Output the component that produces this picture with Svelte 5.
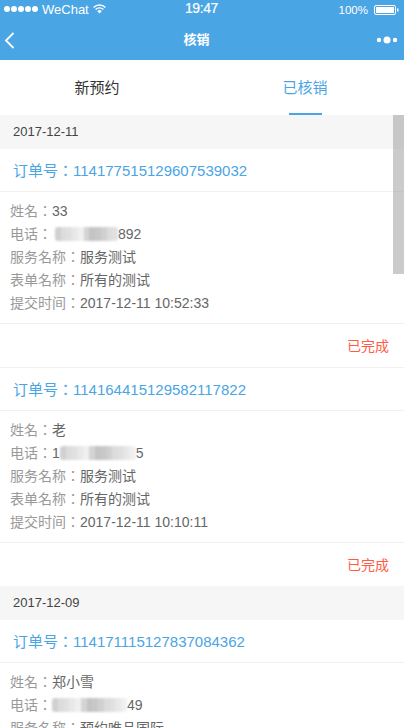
<script>
	const groups = [
		{
			date: '2017-12-11',
			orders: [
				{
					no: '114177515129607539032',
					name: '33',
					before: '',
					mask: 63,
					indent: 3,
					after: '892',
					service: '服务测试',
					form: '所有的测试',
					time: '2017-12-11 10:52:33'
				},
				{
					no: '114164415129582117822',
					name: '老',
					before: '1',
					mask: 76,
					indent: 0,
					after: '5',
					service: '服务测试',
					form: '所有的测试',
					time: '2017-12-11 10:10:11'
				}
			]
		},
		{
			date: '2017-12-09',
			orders: [
				{
					no: '114171115127837084362',
					name: '郑小雪',
					before: '',
					mask: 75,
					indent: 0,
					after: '49',
					service: '预约唯品国际',
					form: '所有的测试',
					time: '2017-12-09 10:10:11'
				}
			]
		}
	];
	const shades = ['#d0d0d0', '#e8e8e8', '#c4c4c4', '#dcdcdc', '#f0f0f0', '#c8c8c8', '#e0e0e0', '#d4d4d4'];
</script>

<div class="page">
	<header class="top">
		<div class="status">
			<div class="status-left">
				<span class="dots">
					{#each Array(5) as _}<i></i>{/each}
				</span>
				<span>WeChat</span>
				<svg width="13" height="10" viewBox="0 0 13 10">
					<path d="M.6 3.4a8.4 8.4 0 0 1 11.8 0M2.6 5.5a5.5 5.5 0 0 1 7.8 0" fill="none" stroke="#fff" stroke-width="1.4" />
					<path d="M4.3 7.2a3 3 0 0 1 4.4 0L6.5 9.6z" fill="#fff" />
				</svg>
			</div>
			<div class="clock">19:47</div>
			<div class="status-right">
				<span>100%</span>
				<svg width="25" height="10" viewBox="0 0 25 10">
					<rect x=".5" y=".5" width="21" height="9" rx="1.5" fill="none" stroke="#fff" />
					<rect x="2" y="2" width="18" height="6" fill="#fff" />
					<rect x="23" y="3.5" width="1.5" height="3" fill="#fff" />
				</svg>
			</div>
		</div>
		<div class="nav">
			<svg class="back" width="11" height="17" viewBox="0 0 11 17">
				<path d="M9.5 1 2 8.5 9.5 16" fill="none" stroke="#fff" stroke-width="1.8" />
			</svg>
			<h1>核销</h1>
			<svg class="more" width="22" height="8" viewBox="0 0 22 8">
				<circle cx="3" cy="4" r="2.2" fill="#fff" />
				<circle cx="11" cy="4" r="3.5" fill="#fff" />
				<circle cx="19" cy="4" r="2.2" fill="#fff" />
			</svg>
		</div>
	</header>

	<nav class="tabs">
		<div class="tab">新预约</div>
		<div class="tab active">已核销</div>
	</nav>

	<main class="list">
		<div class="scrollbar"></div>
		{#each groups as group}
			<div class="date">{group.date}</div>
			{#each group.orders as order}
				<section class="order">
					<div class="order-no"><span>订单号：</span>{order.no}</div>
					<div class="info">
						<p><span>姓名：</span>{order.name}</p>
						<p>
							<span>电话：</span>{order.before}<i class="mask" style="width:{order.mask}px;margin-left:{order.indent}px">
								{#each Array(Math.round(order.mask / 6)) as _, i}
									<b style="background:{shades[(i * 3) % shades.length]}"></b>
								{/each}
							</i>{order.after}
						</p>
						<p><span>服务名称：</span>{order.service}</p>
						<p><span>表单名称：</span>{order.form}</p>
						<p><span>提交时间：</span>{order.time}</p>
					</div>
					<div class="state">已完成</div>
				</section>
			{/each}
		{/each}
	</main>
</div>

<style>
	:global(body) {
		margin: 0;
		background: #fff;
	}

	.page {
		height: 728px;
		overflow: hidden;
		font-family: 'Liberation Sans', 'Noto Sans CJK SC', sans-serif;
		color: #666;
	}

	.top {
		height: 60px;
		background: #4aa5e5;
		color: #fff;
	}

	.status {
		height: 15px;
		padding: 0 5px 2px 4px;
		display: grid;
		grid-template-columns: 1fr auto 1fr;
		align-items: center;
		font-size: 13px;
	}

	.status-left {
		display: flex;
		align-items: center;
		gap: 4px;
	}

	.dots {
		display: flex;
		gap: 1px;
	}

	.dots i {
		width: 6px;
		height: 6px;
		border-radius: 50%;
		background: #fff;
	}

	.clock {
		font-size: 14px;
		letter-spacing: -0.4px;
		-webkit-text-stroke: 0.2px #fff;
		margin-bottom: 2px;
	}

	.status-right {
		display: flex;
		justify-content: flex-end;
		align-items: center;
		gap: 6px;
		font-size: 11.5px;
		margin-top: 2px;
	}

	.nav {
		height: 43px;
		padding: 0 6px 0 4px;
		display: flex;
		align-items: center;
		justify-content: space-between;
	}

	.nav h1 {
		margin: 0 0 0 2px;
		font-size: 13px;
		font-weight: 700;
	}

	.back {
		display: block;
		margin-top: 3px;
	}

	.more {
		margin-top: 2px;
	}

	.tabs {
		height: 55px;
		display: grid;
		grid-template-columns: 194px 198px;
		justify-content: space-between;
		background: #fff;
	}

	.tab {
		position: relative;
		line-height: 55px;
		text-align: center;
		font-size: 15px;
		color: #333;
	}

	.tab.active {
		color: #4aa5e5;
	}

	.tab.active::after {
		content: '';
		position: absolute;
		left: 83px;
		bottom: 0;
		width: 33px;
		height: 2px;
		background: #4aa5e5;
	}

	.list {
		position: relative;
	}

	.scrollbar {
		position: absolute;
		top: 0;
		right: 0;
		width: 11px;
		height: 159px;
		background: rgba(160, 160, 160, 0.55);
	}

	.date {
		height: 34px;
		padding-left: 13px;
		line-height: 34px;
		font-size: 13px;
		color: #444;
		background: #f6f6f6;
	}

	.order-no {
		height: 42px;
		padding-left: 13px;
		line-height: 43px;
		font-size: 15px;
		color: #4aa5e5;
		border-bottom: 1px solid #f1f1f1;
	}

	/* TC face keeps the full-width colon centred in its box */
	.order-no span,
	.info span {
		font-family: 'Liberation Sans', 'Noto Sans CJK TC', sans-serif;
	}

	.info {
		padding: 8px 10px;
		border-bottom: 1px solid #f1f1f1;
	}

	.info p {
		margin: 0;
		height: 23px;
		line-height: 23px;
		font-size: 14px;
		color: #666;
		white-space: nowrap;
	}

	.info span {
		color: #999;
	}

	.mask {
		display: inline-flex;
		flex-wrap: nowrap;
		height: 14px;
		vertical-align: -2px;
		filter: blur(1px);
		overflow: hidden;
		border-radius: 3px;
	}

	.mask b {
		flex: 1;
	}

	.state {
		height: 43px;
		padding-right: 15px;
		line-height: 45px;
		text-align: right;
		font-size: 14px;
		color: #ff5b45;
		border-bottom: 1px solid #f1f1f1;
	}

	section:nth-of-type(2) .state {
		border-bottom: 0;
	}
</style>
